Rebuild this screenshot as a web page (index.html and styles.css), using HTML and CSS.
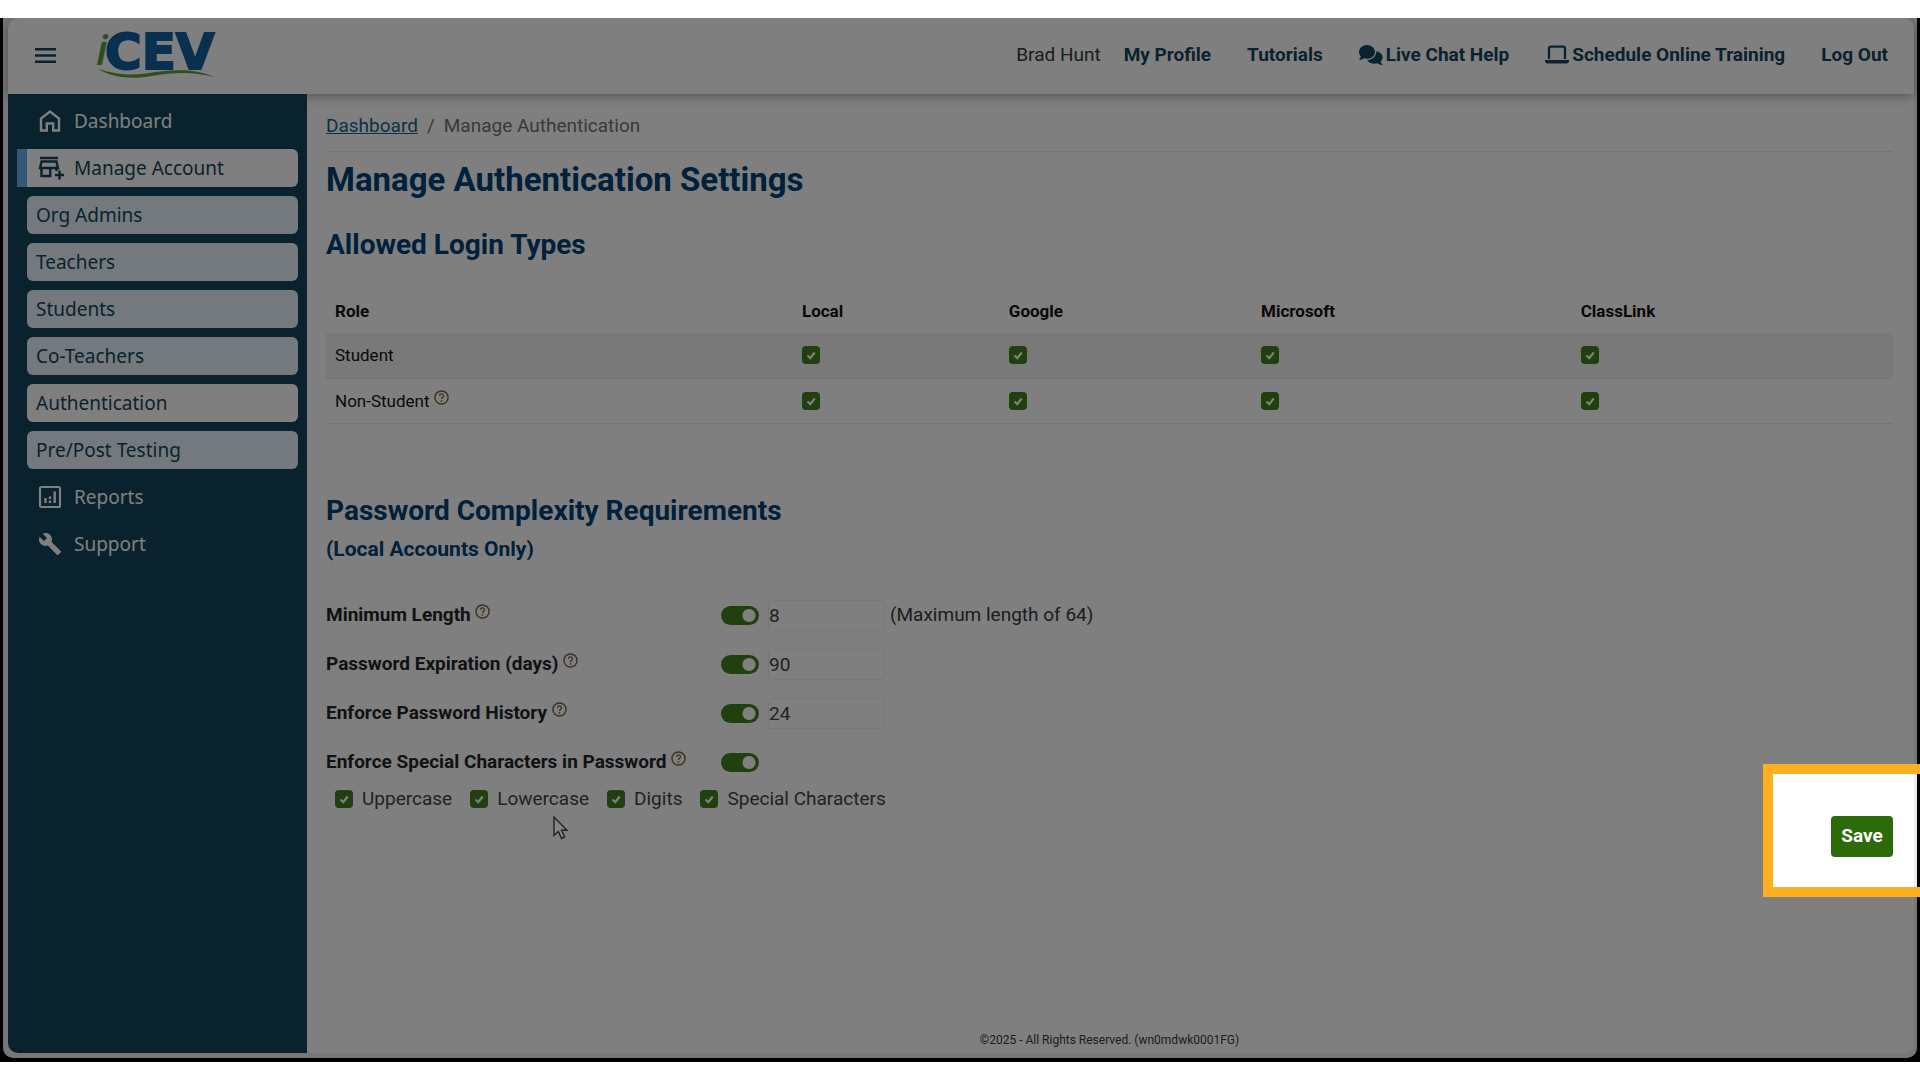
FILE: index.html
```html
<!DOCTYPE html>
<html lang="en">
<head>
  <meta charset="UTF-8">
  <meta name="viewport" content="width=device-width, initial-scale=1.0">
  <title>Manage Authentication - iCEV</title>
  <link rel="stylesheet" href="styles.css">
</head>
<body>
  <!-- shared icon -->
  <svg class="defs" aria-hidden="true">
    <symbol id="help" viewBox="0 0 16 16">
      <circle cx="8" cy="8" r="7" fill="none" stroke="currentColor" stroke-width="1.5"/>
      <path d="M5.9 6.2a2.1 2.1 0 1 1 3 1.9c-.7.4-.9.7-.9 1.5" fill="none" stroke="currentColor" stroke-width="1.4"/>
      <circle cx="8" cy="11.6" r=".9" fill="currentColor"/>
    </symbol>
  </svg>

  <div class="stage">
    <div class="window">
      <header class="header">
        <button class="menu-btn" aria-label="Menu">
          <svg width="21" height="15" viewBox="0 0 21 15"><path d="M0 1.2h21M0 7.5h21M0 13.8h21" stroke="currentColor" stroke-width="2.4"/></svg>
        </button>
        <a href="#" class="logo" aria-label="iCEV">
          <svg width="130" height="48" viewBox="0 0 130 48">
            <text x="0" y="34" class="logo-i">i</text>
            <text x="9" y="38" class="logo-cev">CEV</text>
            <path d="M2 38C18 43 32 45 50 42.500C72 38.500 98 36.500 118 46C96 40 76 41.500 56 45C34 49 16 46 2 38Z" fill="#5a9e3a"/>
          </svg>
        </a>
        <nav class="top-nav">
          <span class="user">Brad Hunt</span>
          <a href="#">My Profile</a>
          <a href="#">Tutorials</a>
          <a href="#">
            <svg width="24" height="21" viewBox="0 0 24 21" fill="currentColor">
              <path d="M8 0C3.600 0 0 3.100 0 7c0 1.700.7 3.200 1.800 4.400C1.500 12.700.7 13.700.3 14.200c-.2.300 0 .7.300.7 2 0 3.600-1 4.500-1.600.9.300 1.900.5 2.900.5 4.400 0 8-3.100 8-6.900S12.400 0 8 0z"/>
              <path d="M17.400 6.300c0 5-4.300 8.700-9.200 9 1.400 2.100 4.100 3.500 7.200 3.500 1 0 2-.2 2.900-.5.900.7 2.500 1.700 4.700 1.700.4 0 .6-.5.300-.8-.4-.4-1.200-1.400-1.500-2.800 1.100-1.100 1.800-2.600 1.800-4.200 0-2.800-2.600-5.200-6.200-5.900z"/>
            </svg>
            Live Chat Help
          </a>
          <a href="#">
            <svg width="24" height="20" viewBox="0 0 24 20">
              <path d="M4 14V3.500A1.800 1.800 0 0 1 5.800 1.700h12.400A1.800 1.800 0 0 1 20 3.500V14" fill="none" stroke="currentColor" stroke-width="2.300"/>
              <path d="M0 15h24v.8a2.700 2.700 0 0 1-2.700 2.700H2.700A2.700 2.700 0 0 1 0 15.800z" fill="currentColor"/>
            </svg>
            Schedule Online Training
          </a>
          <a href="#">Log Out</a>
        </nav>
      </header>

      <div class="body">
        <nav class="sidebar">
          <a href="#" class="item">
            <svg width="24" height="24" viewBox="0 0 24 24"><path d="M3 21.500V9.500L12 2.500l9 7v12h-5.800v-7H8.800v7z" fill="none" stroke="currentColor" stroke-width="2.400"/></svg>
            Dashboard
          </a>
          <a href="#" class="item current">
            <svg width="26" height="24" viewBox="0 0 26 24"><path d="M2 2h18M3.600 5.500h14.800l1.600 6.500H2zM3.500 12v8h8.700v-8M18.500 12v3M21.500 14.500v9M17 19h9" fill="none" stroke="currentColor" stroke-width="2.400"/></svg>
            Manage Account
          </a>
          <a href="#" class="item sub">Org Admins</a>
          <a href="#" class="item sub">Teachers</a>
          <a href="#" class="item sub">Students</a>
          <a href="#" class="item sub">Co-Teachers</a>
          <a href="#" class="item sub active">Authentication</a>
          <a href="#" class="item sub">Pre/Post Testing</a>
          <a href="#" class="item">
            <svg width="24" height="24" viewBox="0 0 24 24"><rect x="2" y="2" width="20" height="20" rx="1.500" fill="none" stroke="currentColor" stroke-width="2.200"/><path d="M7.500 18v-5M12 18v-2.500M12 14v-2.500M16.700 18V6.500" stroke="currentColor" stroke-width="2.400"/></svg>
            Reports
          </a>
          <a href="#" class="item">
            <svg width="24" height="24" viewBox="0 0 24 24"><path d="M22.700 19l-9.100-9.100c.9-2.300.4-5-1.500-6.900-2-2-5-2.400-7.400-1.300L9 6 6 9 1.600 4.700C.4 7.100.9 10.100 2.900 12.100c1.900 1.900 4.600 2.400 6.900 1.500l9.100 9.100c.4.400 1 .4 1.400 0l2.300-2.300c.5-.4.500-1.100.1-1.400z" fill="currentColor"/></svg>
            Support
          </a>
        </nav>

        <main class="main">
          <div class="breadcrumb">
            <a href="#">Dashboard</a><span class="slash">/</span><span class="here">Manage Authentication</span>
          </div>

          <h1>Manage Authentication Settings</h1>
          <h2>Allowed Login Types</h2>

          <table class="logins">
            <thead>
              <tr><th class="role">Role</th><th class="local">Local</th><th class="google">Google</th><th class="microsoft">Microsoft</th><th>ClassLink</th></tr>
            </thead>
            <tbody>
              <tr class="striped">
                <td>Student</td>
                <td><input type="checkbox" class="check" aria-label="Student Local" checked></td>
                <td><input type="checkbox" class="check" aria-label="Student Google" checked></td>
                <td><input type="checkbox" class="check" aria-label="Student Microsoft" checked></td>
                <td><input type="checkbox" class="check" aria-label="Student ClassLink" checked></td>
              </tr>
              <tr>
                <td>Non-Student <svg class="help"><use href="#help"/></svg></td>
                <td><input type="checkbox" class="check" aria-label="Non-Student Local" checked></td>
                <td><input type="checkbox" class="check" aria-label="Non-Student Google" checked></td>
                <td><input type="checkbox" class="check" aria-label="Non-Student Microsoft" checked></td>
                <td><input type="checkbox" class="check" aria-label="Non-Student ClassLink" checked></td>
              </tr>
            </tbody>
          </table>

          <h2>Password Complexity Requirements</h2>
          <h3>(Local Accounts Only)</h3>

          <form class="rules">
            <div class="rule">
              <label for="minLength">Minimum Length <svg class="help"><use href="#help"/></svg></label>
              <input type="checkbox" class="toggle" aria-label="Use minimum length" checked>
              <input type="text" id="minLength" class="value" value="8">
              <span>(Maximum length of 64)</span>
            </div>
            <div class="rule">
              <label for="expiration">Password Expiration (days) <svg class="help"><use href="#help"/></svg></label>
              <input type="checkbox" class="toggle" aria-label="Use password expiration" checked>
              <input type="text" id="expiration" class="value" value="90">
            </div>
            <div class="rule">
              <label for="history">Enforce Password History <svg class="help"><use href="#help"/></svg></label>
              <input type="checkbox" class="toggle" aria-label="Use password history" checked>
              <input type="text" id="history" class="value" value="24">
            </div>
            <div class="rule">
              <label for="special">Enforce Special Characters in Password <svg class="help"><use href="#help"/></svg></label>
              <input type="checkbox" id="special" class="toggle" checked>
            </div>
            <div class="kinds">
              <label><input type="checkbox" class="check" checked>Uppercase</label>
              <label><input type="checkbox" class="check" checked>Lowercase</label>
              <label><input type="checkbox" class="check" checked>Digits</label>
              <label><input type="checkbox" class="check" checked>Special Characters</label>
            </div>
            <div class="actions">
              <button type="button" class="save">Save</button>
              <div class="spotlight"></div>
            </div>
          </form>

          <footer>©2025 - All Rights Reserved. (wn0mdwk0001FG)</footer>
        </main>
      </div>
    </div>

    <svg class="cursor" width="16" height="24" viewBox="0 0 16 24"><path d="M1 1v18.500l4.300-4 3.200 7 3.200-1.500-3.100-6.700H14z" fill="#858585" stroke="#222" stroke-width="1.400"/></svg>
  </div>
</body>
</html>
```
FILE: styles.css
```css
* {
  box-sizing: border-box;
}
body {
  margin: 0;
  padding: 18px 0;
  min-height: 100vh;
  display: flex;
  background: #fff;
  font-family: Roboto, Arial, sans-serif;
  font-size: 19px;
  line-height: 24px;
  color: #343a40;
}
.defs {
  position: absolute;
  width: 0;
  height: 0;
}
.stage {
  position: relative;
  flex: 1;
  display: flex;
  padding: 0 3px 4px 3px;
  background: #000;
  overflow: hidden;
}
.window {
  flex: 1;
  display: flex;
  flex-direction: column;
  padding: 0 3px 5px 5px;
  background: #eee;
  border-radius: 0 0 10px 10px;
}

/* Header */
.header {
  position: relative;
  z-index: 1;
  display: flex;
  align-items: center;
  height: 76px;
  padding: 0 26px 2px 27px;
  background: #fff;
  border-radius: 10px 10px 0 0;
  box-shadow: 0 2px 12px rgba(0,0,0,0.35);
}
.menu-btn {
  display: flex;
  margin-right: 40px;
  padding: 0;
  border: none;
  background: none;
  color: #14445c;
  cursor: pointer;
}
.logo {
  display: flex;
}
.logo svg {
  overflow: visible;
}
.logo-i {
  font: italic 600 42px "Open Sans", sans-serif;
  fill: #5a9e3a;
}
.logo-cev {
  font: 700 50px "DejaVu Sans", sans-serif;
  fill: #12609e;
  stroke: #12609e;
  stroke-width: 2;
}
.top-nav {
  margin-left: auto;
  display: flex;
  align-items: center;
  gap: 36px;
}
.top-nav .user {
  margin-right: -13px;
}
.top-nav a {
  display: flex;
  align-items: center;
  gap: 3px;
  color: #14445c;
  font-weight: 700;
  text-decoration: none;
}

/* Sidebar */
.body {
  flex: 1;
  display: flex;
}
.sidebar {
  position: relative;
  z-index: 2;
  width: 299px;
  padding: 8px 9px;
  display: flex;
  flex-direction: column;
  gap: 9px;
  background: #14445c;
  border-radius: 0 0 0 10px;
  font-family: "Noto Sans", sans-serif;
}
.item {
  display: flex;
  align-items: center;
  height: 38px;
  margin-left: 10px;
  padding: 0 9px;
  border-radius: 6px;
  color: #fff;
  text-decoration: none;
}
.item svg {
  margin-right: 12px;
  margin-left: 2px;
}
.item.current {
  margin-left: 0;
  border-left: 10px solid #69afee;
  border-radius: 0 6px 6px 0;
  background: #fff;
  color: #14445c;
}
.item.current svg {
  margin-right: 10px;
}
.item.sub {
  background: #e8f3fc;
  color: #14445c;
}
.item.sub.active {
  background: #fff;
}

/* Main column */
.main {
  flex: 1;
  display: flex;
  flex-direction: column;
  padding: 20px 21px 0 19px;
  background: #fff;
  border-radius: 0 0 10px 0;
}
.breadcrumb {
  padding-bottom: 13px;
  border-bottom: 1px solid #e9e9e9;
  color: #6c757d;
}
.breadcrumb a {
  color: #1b6392;
}
.slash {
  margin: 0 9px;
}
h1, h2, h3 {
  margin: 0;
  color: #004276;
  font-weight: 700;
}
h1 {
  margin-top: 8px;
  font-size: 33px;
  line-height: 40px;
}
h2 {
  margin-top: 28px;
  font-size: 28px;
  line-height: 34px;
}
h3 {
  margin-top: 9px;
  font-size: 21px;
  line-height: 24px;
}
.help {
  width: 15px;
  height: 15px;
  vertical-align: 2px;
  color: #7d6338;
}

.logins {
  width: 100%;
  margin: 26px 0 42px;
  border-collapse: collapse;
  table-layout: fixed;
  font-size: 17px;
  line-height: 24px;
  color: #111;
}
.logins th, .logins td {
  padding: 10px 9px;
  text-align: left;
}
.logins tr {
  height: 45px;
}
.logins tbody tr {
  border-bottom: 1px solid #e9e9e9;
}
.striped {
  background: #f2f2f2;
}
.role { width: 29.8%; }
.local { width: 13.2%; }
.google { width: 16.1%; }
.microsoft { width: 20.4%; }

.check {
  appearance: none;
  display: block;
  width: 18px;
  height: 18px;
  margin: 0;
  border-radius: 4px;
  background: #408020 url("data:image/svg+xml,%3Csvg xmlns='http://www.w3.org/2000/svg' viewBox='0 0 18 18'%3E%3Cpath d='M5.500 9.500l2.800 2.700L12.700 6.500' fill='none' stroke='white' stroke-width='2.200'/%3E%3C/svg%3E");
}
.toggle {
  appearance: none;
  width: 38px;
  height: 19px;
  margin: 0 9px 0 0;
  border-radius: 10px;
  background: radial-gradient(circle at 28px 50%, #fff 6px, #408020 7px);
}

.rules {
  padding-top: 30px;
}
.rule {
  display: flex;
  align-items: center;
  height: 49px;
}
.rule label {
  width: 395px;
  color: #212529;
  font-weight: 700;
}
.value {
  width: 117px;
  height: 31px;
  margin-right: 5px;
  padding: 0;
  border: 1px solid #eee;
  border-radius: 4px;
  background: #fff;
  color: #444;
  font: inherit;
}
.kinds {
  display: flex;
  gap: 18px;
  padding-left: 9px;
}
.kinds label {
  display: flex;
  align-items: center;
  gap: 9px;
  color: #444;
}
.actions {
  position: relative;
  display: flex;
  justify-content: flex-end;
  margin-top: 5px;
}
.save {
  width: 62px;
  height: 41px;
  padding: 0;
  border: none;
  border-radius: 4px;
  background: #2d6a0a;
  color: #fff;
  font: inherit;
  font-weight: 700;
  cursor: pointer;
}
/* Everything outside the marked area is dimmed by the spread shadow */
.spotlight {
  position: absolute;
  z-index: 5;
  top: -52px;
  right: -37px;
  width: 167px;
  height: 133px;
  border: 10px solid #ffb020;
  box-shadow: 0 0 0 3000px rgba(0,0,0,0.5);
  pointer-events: none;
}
.cursor {
  position: absolute;
  z-index: 6;
  left: 553px;
  top: 798px;
}
footer {
  margin-top: auto;
  padding-bottom: 5px;
  text-align: center;
  font-size: 12px;
  line-height: 16px;
}
```
